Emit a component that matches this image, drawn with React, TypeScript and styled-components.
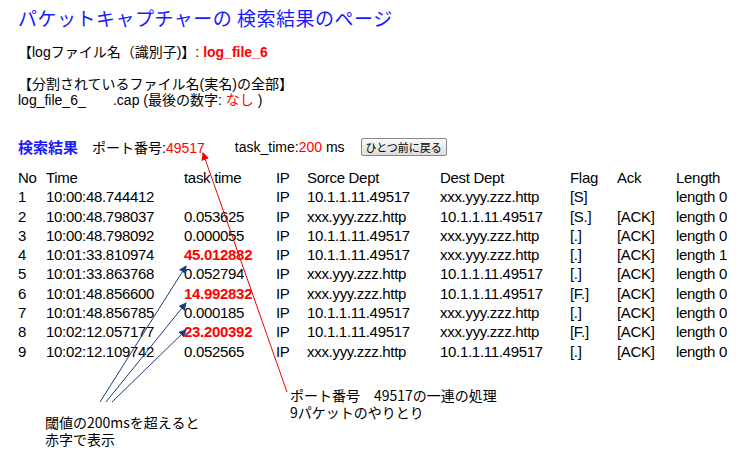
import React from "react";
import styled, { createGlobalStyle } from "styled-components";

const G = createGlobalStyle`
  html,body{margin:0;padding:0;background:#fff;}
  body{font-family:"Liberation Sans","Noto Sans CJK JP",sans-serif;color:#000;}
`;
const Page = styled.div`position:relative;width:743px;height:464px;overflow:hidden;padding:6px 0 0 18px;box-sizing:border-box;`;
const Title = styled.div`font-family:"Noto Sans CJK JP",sans-serif;font-size:19px;color:#1a1aff;line-height:24px;letter-spacing:0.5px;`;
const Line = styled.div<{ mt?: number }>`font-family:"Liberation Sans","Noto Sans CJK JP",sans-serif;font-size:14px;line-height:16px;margin-top:${p => p.mt ?? 0}px;white-space:pre;`;
const Red = styled.span<{ bold?: boolean }>`color:#ff0000;font-weight:${p => (p.bold ? 700 : 400)};`;
const Bar = styled.div`display:flex;align-items:center;margin-top:28px;font-size:14px;font-family:"Liberation Sans","Noto Sans CJK JP",sans-serif;`;
const Head = styled.span`color:#1a1aff;font-weight:700;font-size:15px;margin-right:14px;`;
const Btn = styled.button`font-family:"Noto Sans CJK JP",sans-serif;font-size:11px;padding:0 4px;height:18px;border:1px solid #888;border-radius:2px;background:linear-gradient(#fafafa,#ddd);margin-left:16px;`;
const Table = styled.div`margin-top:11px;display:grid;grid-template-columns:28px 138px 92px 31px 133px 130px 47px 59px 70px;font-size:15px;line-height:19.3px;white-space:nowrap;font-family:"Liberation Sans",sans-serif;letter-spacing:-0.3px;`;
const C = styled.div<{ red?: boolean }>`color:${p => (p.red ? "#ff0000" : "#000")};font-weight:${p => (p.red ? 700 : 400)};`;
const Note = styled.div<{ x: number; y: number }>`position:absolute;left:${p => p.x}px;top:${p => p.y}px;font-family:"Noto Sans CJK JP",sans-serif;font-size:14px;line-height:17px;`;
const Overlay = styled.svg`position:absolute;left:0;top:0;pointer-events:none;`;

const hdr = ["No", " Time", "task time", "IP", "Sorce Dept", "Dest Dept", "Flag", "Ack", "Length"];
const S = "10.1.1.11.49517", D = "xxx.yyy.zzz.http";
const rows: [string, string, string, boolean, string, string, string, string, string][] = [
  ["1", "10:00:48.744412", "", false, S, D, "[S]", "", "length 0"],
  ["2", "10:00:48.798037", "0.053625", false, D, S, "[S.]", "[ACK]", "length 0"],
  ["3", "10:00:48.798092", "0.000055", false, S, D, "[.]", "[ACK]", "length 0"],
  ["4", "10:01:33.810974", "45.012882", true, S, D, "[.]", "[ACK]", "length 1"],
  ["5", "10:01:33.863768", "0.052794", false, D, S, "[.]", "[ACK]", "length 0"],
  ["6", "10:01:48.856600", "14.992832", true, D, S, "[F.]", "[ACK]", "length 0"],
  ["7", "10:01:48.856785", "0.000185", false, S, D, "[.]", "[ACK]", "length 0"],
  ["8", "10:02:12.057177", "23.200392", true, S, D, "[F.]", "[ACK]", "length 0"],
  ["9", "10:02:12.109742", "0.052565", false, D, S, "[.]", "[ACK]", "length 0"],
];

export default function App() {
  return (
    <Page>
      <G />
      <Title>パケットキャプチャーの 検索結果のページ</Title>
      <Line mt={14}>【logファイル名（識別子)】: <Red bold>log_file_6</Red></Line>
      <Line mt={16}>【分割されているファイル名(実名)の全部】</Line>
      <Line>log_file_6_       .cap (最後の数字: <Red>なし</Red> )</Line>
      <Bar>
        <Head>検索結果</Head>
        <span>ポート番号:<Red>49517</Red></span>
        <span style={{ marginLeft: 30 }}>task_time:<Red>200</Red> ms</span>
        <Btn>ひとつ前に戻る</Btn>
      </Bar>
      <Table>
        {hdr.map((h, i) => <C key={"h" + i}>{h}</C>)}
        {rows.map(r => (
          <React.Fragment key={r[0]}>
            <C>{r[0]}</C><C>{r[1]}</C><C red={r[3]}>{r[2]}</C><C>IP</C>
            <C>{r[4]}</C><C>{r[5]}</C><C>{r[6]}</C><C>{r[7]}</C><C>{r[8]}</C>
          </React.Fragment>
        ))}
      </Table>
      <Note x={45} y={414}>閾値の200msを超えると<br />赤字で表示</Note>
      <Note x={290} y={387}>ポート番号　49517の一連の処理<br />9パケットのやりとり</Note>
      <Overlay width={743} height={464}>
        <defs>
          <marker id="b" markerWidth="8" markerHeight="8" refX="7" refY="4" orient="auto"><path d="M0,0L8,4L0,8z" fill="#1f3a7a" /></marker>
          <marker id="r" markerWidth="8" markerHeight="8" refX="7" refY="4" orient="auto"><path d="M0,0L8,4L0,8z" fill="#e00" /></marker>
        </defs>
        <line x1="100" y1="402" x2="186" y2="266" stroke="#1f3a7a" markerEnd="url(#b)" />
        <line x1="106" y1="402" x2="186" y2="303" stroke="#1f3a7a" markerEnd="url(#b)" />
        <line x1="112" y1="402" x2="186" y2="330" stroke="#1f3a7a" markerEnd="url(#b)" />
        <line x1="287" y1="392" x2="203" y2="153" stroke="#e00" markerEnd="url(#r)" />
      </Overlay>
    </Page>
  );
}
